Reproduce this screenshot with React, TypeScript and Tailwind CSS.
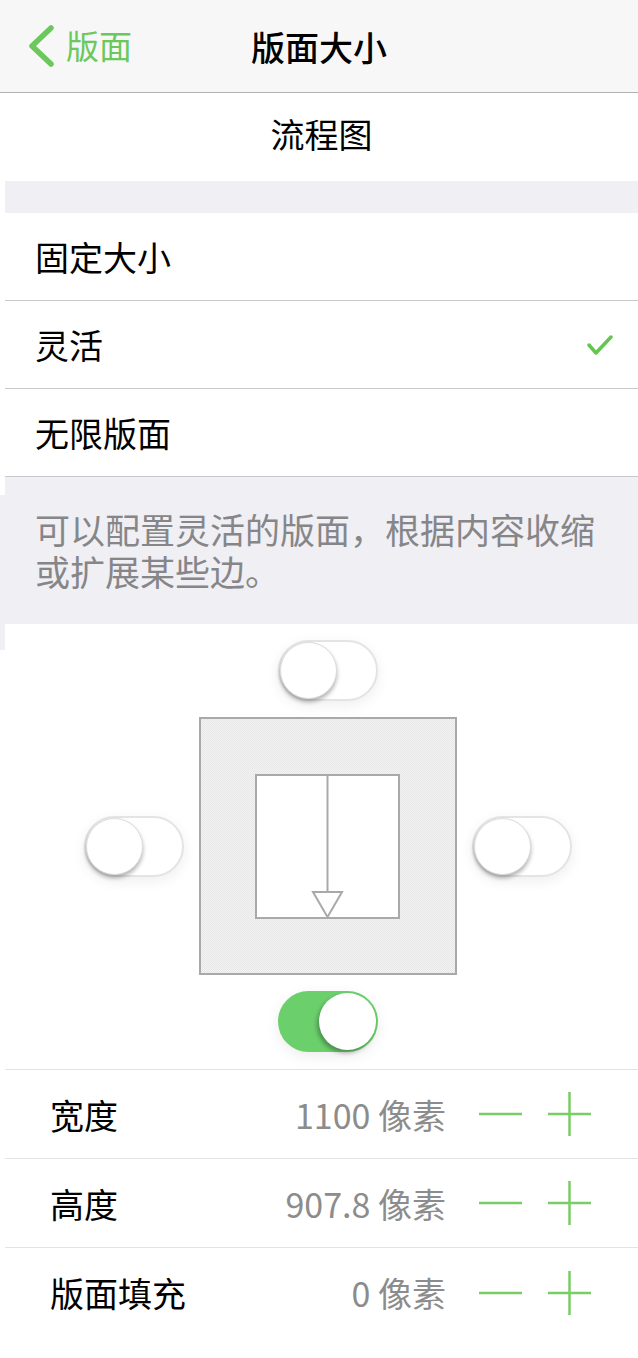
import React from "react";

const FONT = { fontFamily: '"Noto Sans CJK SC", "Noto Sans", sans-serif' };

function Switch({ on = false }: { on?: boolean }) {
  if (on) {
    return (
      <div className="relative h-[61px] w-[100px] rounded-full bg-[#6bcf6c] shadow-[0_4px_14px_rgba(0,0,0,0.08)]">
        <div className="absolute right-[2px] top-[2px] h-[57px] w-[57px] rounded-full bg-white shadow-[-2px_3px_4px_rgba(0,0,0,0.3)]" />
      </div>
    );
  }
  return (
    <div className="relative h-[61px] w-[100px] rounded-full border-2 border-[#e4e4e4] bg-white shadow-[0_4px_14px_rgba(0,0,0,0.07)]">
      <div className="absolute left-[0px] top-[0px] h-[57px] w-[57px] rounded-full border border-[#dcdcdc] bg-white shadow-[0_3px_4px_rgba(0,0,0,0.3)]" />
    </div>
  );
}

function Diagram() {
  return (
    <svg width="258" height="258" viewBox="0 0 258 258">
      <defs>
        <pattern id="dither" width="2" height="2" patternUnits="userSpaceOnUse">
          <rect width="2" height="2" fill="#f4f4f4" />
          <rect width="1" height="1" fill="#e6e6e6" />
          <rect x="1" y="1" width="1" height="1" fill="#e6e6e6" />
        </pattern>
      </defs>
      <rect x="1" y="1" width="256" height="256" fill="url(#dither)" stroke="#a9a9a9" strokeWidth="2" />
      <rect x="57" y="58" width="143" height="143" fill="#ffffff" stroke="#a9a9a9" strokeWidth="2" />
      <line x1="128.5" y1="58" x2="128.5" y2="175" stroke="#a9a9a9" strokeWidth="2" />
      <polygon points="114,175 143,175 128.5,200" fill="#ffffff" stroke="#a9a9a9" strokeWidth="2" strokeLinejoin="miter" />
    </svg>
  );
}

function Stepper() {
  return (
    <div className="flex items-center">
      <svg width="43" height="44" viewBox="0 0 43 44" className="ml-[33px]">
        <line x1="0" y1="22" x2="43" y2="22" stroke="#78cd66" strokeWidth="2.5" />
      </svg>
      <svg width="43" height="44" viewBox="0 0 43 44" className="ml-[26px]">
        <line x1="0" y1="22" x2="43" y2="22" stroke="#78cd66" strokeWidth="2.5" />
        <line x1="21.5" y1="0" x2="21.5" y2="44" stroke="#78cd66" strokeWidth="2.5" />
      </svg>
    </div>
  );
}

function SizeRow({ label, value, last = false }: { label: string; value: string; last?: boolean }) {
  return (
    <div className={`flex h-[89px] items-center pl-[45px] pr-[47px] ${last ? "" : "border-b border-[#e3e3e3]"}`}>
      <span className="text-[34px] text-black">{label}</span>
      <span className="ml-auto text-[34px] text-[#8c8c8c]">{value}</span>
      <Stepper />
    </div>
  );
}

function OptionRow({ label, checked = false }: { label: string; checked?: boolean }) {
  return (
    <div className="flex h-[88px] items-center border-b border-[#c8c7cc] pl-[30px] pr-[25px]">
      <span className="text-[34px] text-black">{label}</span>
      {checked && (
        <svg width="26" height="22" viewBox="0 0 26 22" className="ml-auto">
          <polyline points="2,11 9,19 24,3" fill="none" stroke="#62c650" strokeWidth="3.5" strokeLinecap="round" strokeLinejoin="round" />
        </svg>
      )}
    </div>
  );
}

export default function App() {
  return (
    <div className="h-[1358px] w-[638px] overflow-hidden bg-white" style={FONT}>
      {/* navigation bar */}
      <div className="relative flex h-[93px] items-center border-b border-[#b2b2b2] bg-[#f7f7f8]">
        <div className="flex items-center pl-[27px]">
          <svg width="28" height="42" viewBox="0 0 28 42">
            <polyline points="24,3 5,21 24,39" fill="none" stroke="#6cc85b" strokeWidth="5.5" strokeLinecap="round" strokeLinejoin="round" />
          </svg>
          <span className="ml-[11px] text-[33px] text-[#6cc85b]">版面</span>
        </div>
        <span className="absolute left-1/2 -translate-x-1/2 text-[34px] font-medium text-black">版面大小</span>
      </div>

      <div className="flex">
        {/* narrow left edge strip */}
        <div className="flex w-[5px] flex-col">
          <div className="h-[402px] bg-white" />
          <div className="h-[155px] bg-[#efeff4]" />
        </div>

        <div className="flex-1">
          <div className="flex h-[88px] items-center justify-center bg-white pb-[8px]">
            <span className="text-[34px] text-black">流程图</span>
          </div>
          <div className="h-[32px] bg-[#efeff4]" />

          <OptionRow label="固定大小" />
          <OptionRow label="灵活" checked />
          <OptionRow label="无限版面" />

          <div className="h-[147px] bg-[#efeff4] pl-[30px] pr-[20px] pt-[31px] text-[35px] leading-[42px] text-[#868689]">
            可以配置灵活的版面，根据内容收缩或扩展某些边。
          </div>

          {/* edge toggles around the page preview */}
          <div className="flex h-[445px] flex-col items-center pl-[12px] pt-[16px]">
            <Switch />
            <div className="mt-[16px] flex items-center gap-[15px]">
              <Switch />
              <Diagram />
              <Switch />
            </div>
            <div className="mt-[16px]">
              <Switch on />
            </div>
          </div>

          <div className="border-t border-[#e3e3e3]">
            <SizeRow label="宽度" value="1100 像素" />
            <SizeRow label="高度" value="907.8 像素" />
            <SizeRow label="版面填充" value="0 像素" last />
          </div>
        </div>
      </div>
    </div>
  );
}
